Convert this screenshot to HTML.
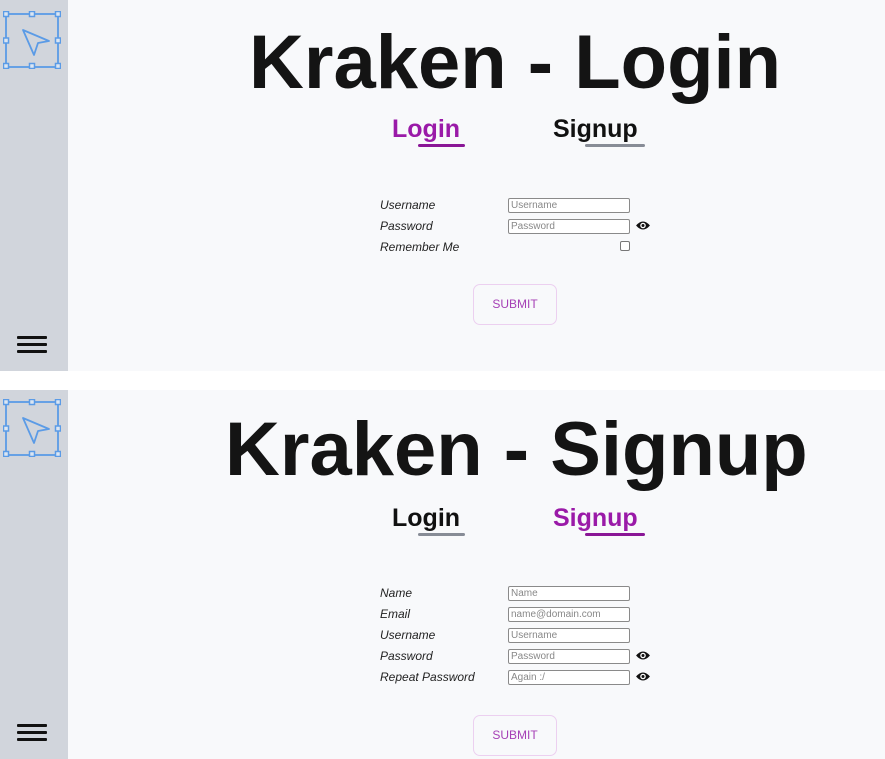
<!DOCTYPE html>
<html><head><meta charset="utf-8"><style>
*{margin:0;padding:0;box-sizing:border-box}
body{width:885px;height:759px;background:#fff;position:relative;overflow:hidden;font-family:"Liberation Sans",sans-serif}
.panel{position:absolute;left:0;width:885px;background:#f8f9fb}
.side{position:absolute;left:0;top:0;bottom:0;width:68px;background:#d1d5dc}
.abs{position:absolute}
.title{position:absolute;font-weight:bold;font-size:76px;line-height:1;color:#141414;white-space:nowrap}
.tab{position:absolute;font-weight:bold;font-size:25px;line-height:1;white-space:nowrap}
.ul{position:absolute;height:3px;border-radius:2px}
.lbl{position:absolute;left:380px;font-size:12px;font-style:italic;color:#222;line-height:14px}
.inp{position:absolute;left:508px;width:122px;height:15px;border:1px solid #8a8a8a;border-radius:2px;background:#fff;font-size:10px;color:#888;line-height:14px;padding-left:2px}
.btn{position:absolute;left:473px;width:84px;height:41px;border:1.5px solid #ecd0f0;border-radius:7px;color:#a640b6;font-size:12px;text-align:center;line-height:38px}
.ham{position:absolute;left:17px;width:30px;height:3px;background:#111;border-radius:1px}
</style></head><body>

<div class="panel" style="top:0;height:371px">
 <div class="side">
  <svg class="abs" style="left:3px;top:11px" width="58" height="58" viewBox="0 0 58 58">
   <rect x="3" y="3" width="52" height="53" fill="none" stroke="#5b9be6" stroke-width="1.8"/>
   <g fill="#dce6f2" stroke="#5b9be6" stroke-width="1.5">
    <rect x="0.5" y="0.5" width="5" height="5"/><rect x="26.5" y="0.5" width="5" height="5"/><rect x="52.5" y="0.5" width="5" height="5"/>
    <rect x="0.5" y="27" width="5" height="5"/><rect x="52.5" y="27" width="5" height="5"/>
    <rect x="0.5" y="52.5" width="5" height="5"/><rect x="26.5" y="52.5" width="5" height="5"/><rect x="52.5" y="52.5" width="5" height="5"/>
   </g>
   <path d="M20 19 L46 30 L35 32 L31 44 Z" fill="none" stroke="#5b9be6" stroke-width="1.8" stroke-linejoin="round"/>
  </svg>
  <div class="ham" style="top:336px"></div><div class="ham" style="top:343px"></div><div class="ham" style="top:350px"></div>
 </div>
 <div class="title" style="top:25px;left:249px">Kraken - Login</div>
 <div class="tab" style="left:392px;top:117px;color:#9a1aa8">Login</div>
 <div class="ul" style="left:418px;top:144px;width:47px;background:#8a1696"></div>
 <div class="tab" style="left:553px;top:117px;color:#111">Signup</div>
 <div class="ul" style="left:585px;top:144px;width:60px;background:#878c96"></div>

 <div class="lbl" style="top:198px">Username</div><div class="inp" style="top:198px">Username</div>
 <div class="lbl" style="top:219px">Password</div><div class="inp" style="top:219px">Password</div>
 <svg class="abs" style="left:635px;top:219px" width="16" height="13" viewBox="0 0 15 12"><path d="M1 6 Q7.5 -1.5 14 6 Q7.5 13.5 1 6Z" fill="#111"/><circle cx="7.5" cy="6" r="2.6" fill="#fff"/><circle cx="7.5" cy="6" r="1.4" fill="#111"/></svg>
 <div class="lbl" style="top:240px">Remember Me</div>
 <div class="abs" style="left:620px;top:241px;width:10px;height:10px;border:1px solid #777;border-radius:2px;background:#fff"></div>
 <div class="btn" style="top:284px">SUBMIT</div>
</div>

<div class="panel" style="top:390px;height:369px">
 <div class="side">
  <svg class="abs" style="left:3px;top:9px" width="58" height="58" viewBox="0 0 58 58">
   <rect x="3" y="3" width="52" height="53" fill="none" stroke="#5b9be6" stroke-width="1.8"/>
   <g fill="#dce6f2" stroke="#5b9be6" stroke-width="1.5">
    <rect x="0.5" y="0.5" width="5" height="5"/><rect x="26.5" y="0.5" width="5" height="5"/><rect x="52.5" y="0.5" width="5" height="5"/>
    <rect x="0.5" y="27" width="5" height="5"/><rect x="52.5" y="27" width="5" height="5"/>
    <rect x="0.5" y="52.5" width="5" height="5"/><rect x="26.5" y="52.5" width="5" height="5"/><rect x="52.5" y="52.5" width="5" height="5"/>
   </g>
   <path d="M20 19 L46 30 L35 32 L31 44 Z" fill="none" stroke="#5b9be6" stroke-width="1.8" stroke-linejoin="round"/>
  </svg>
  <div class="ham" style="top:334px"></div><div class="ham" style="top:341px"></div><div class="ham" style="top:348px"></div>
 </div>
 <div class="title" style="top:22px;left:225px">Kraken - Signup</div>
 <div class="tab" style="left:392px;top:116px;color:#111">Login</div>
 <div class="ul" style="left:418px;top:143px;width:47px;background:#878c96"></div>
 <div class="tab" style="left:553px;top:116px;color:#9a1aa8">Signup</div>
 <div class="ul" style="left:585px;top:143px;width:60px;background:#8a1696"></div>

 <div class="lbl" style="top:196px">Name</div><div class="inp" style="top:196px">Name</div>
 <div class="lbl" style="top:217px">Email</div><div class="inp" style="top:217px">name@domain.com</div>
 <div class="lbl" style="top:238px">Username</div><div class="inp" style="top:238px">Username</div>
 <div class="lbl" style="top:259px">Password</div><div class="inp" style="top:259px">Password</div>
 <svg class="abs" style="left:635px;top:259px" width="16" height="13" viewBox="0 0 15 12"><path d="M1 6 Q7.5 -1.5 14 6 Q7.5 13.5 1 6Z" fill="#111"/><circle cx="7.5" cy="6" r="2.6" fill="#fff"/><circle cx="7.5" cy="6" r="1.4" fill="#111"/></svg>
 <div class="lbl" style="top:280px">Repeat Password</div><div class="inp" style="top:280px">Again :/</div>
 <svg class="abs" style="left:635px;top:280px" width="16" height="13" viewBox="0 0 15 12"><path d="M1 6 Q7.5 -1.5 14 6 Q7.5 13.5 1 6Z" fill="#111"/><circle cx="7.5" cy="6" r="2.6" fill="#fff"/><circle cx="7.5" cy="6" r="1.4" fill="#111"/></svg>
 <div class="btn" style="top:325px">SUBMIT</div>
</div>
</body></html>
